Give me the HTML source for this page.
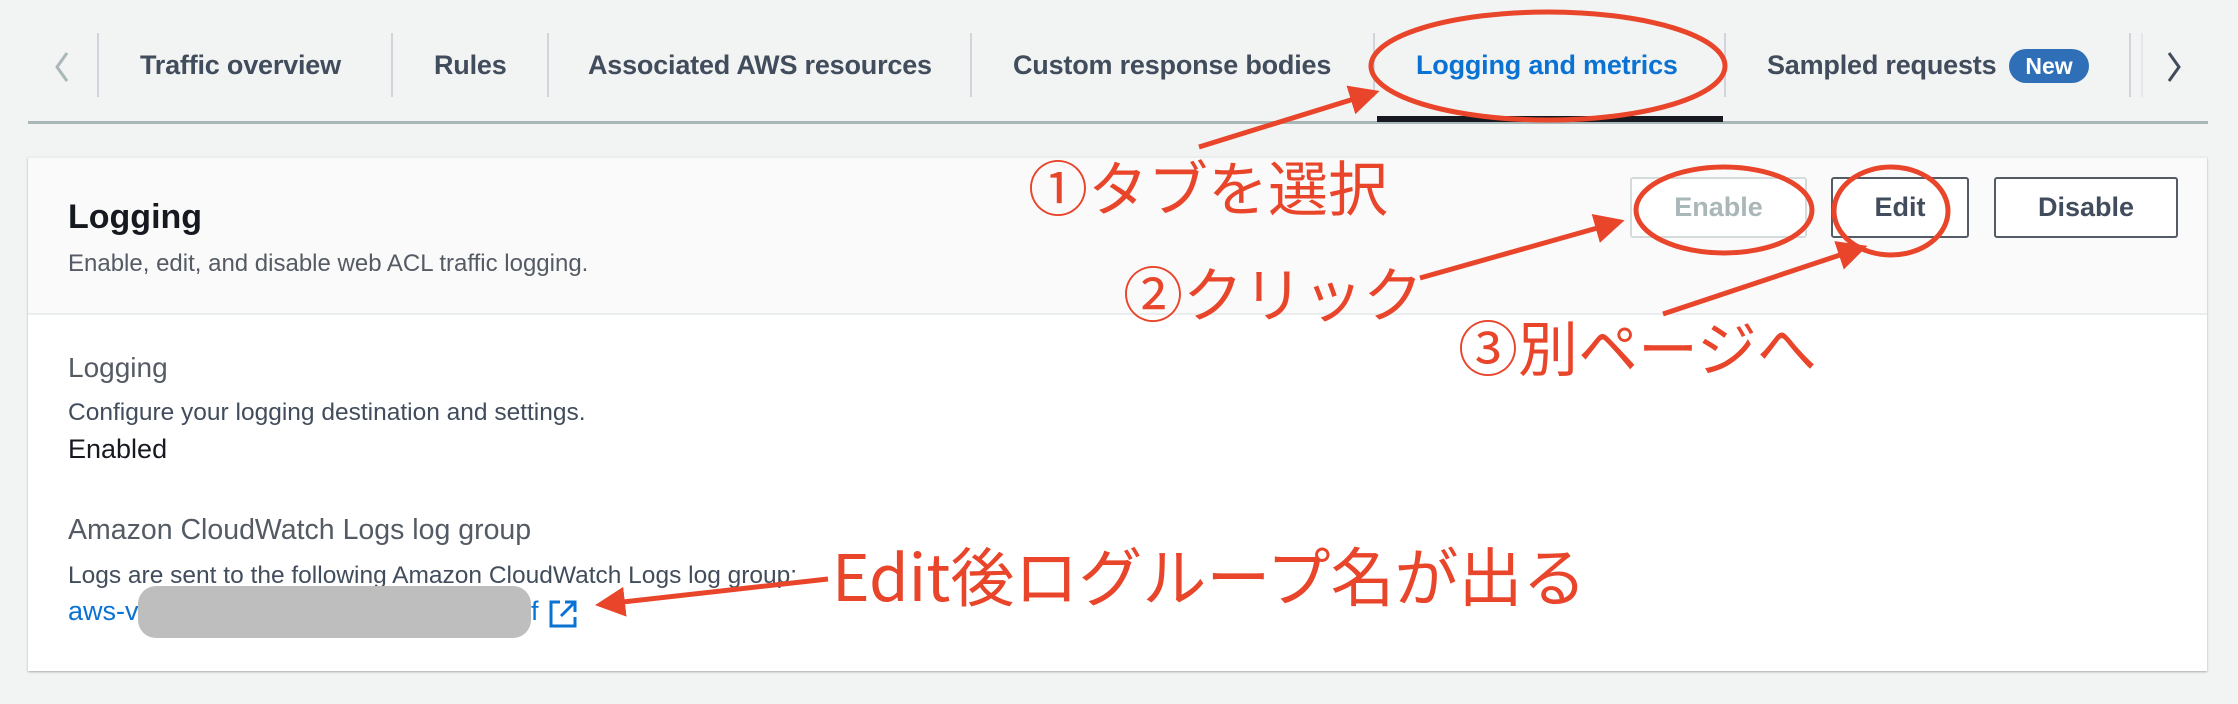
<!DOCTYPE html>
<html><head><meta charset="utf-8"><style>
*{margin:0;padding:0;box-sizing:border-box}
body{width:2238px;height:704px;background:#f2f3f3;position:relative;overflow:hidden;font-family:"Liberation Sans","Noto Sans CJK JP",sans-serif}
.a{position:absolute;white-space:nowrap}
.tab{font-size:27px;font-weight:bold;color:#414d5c;top:50px;line-height:30px;letter-spacing:-0.2px}
.div{position:absolute;width:2px;background:#d1d5db;top:33px;height:64px}
.card{position:absolute;left:28px;top:157px;width:2179px;height:514px;background:#fff;box-shadow:0 1px 2px rgba(0,0,0,.3);border-top:1px solid #eaeded}
.hdr{position:absolute;left:0;top:0;width:100%;height:157px;background:#fafafa;border-bottom:2px solid #eaeded}
.btn{position:absolute;top:177px;height:61px;border:2px solid #545b64;border-radius:3px;font-weight:bold;font-size:27px;color:#414d5c;display:flex;align-items:center;justify-content:center;background:#fff}
.jp{color:#e8452b;font-size:60px;font-family:"Noto Sans CJK JP",sans-serif;line-height:1}
</style></head><body>
<svg class="a" style="left:52px;top:50px" width="20" height="34"><path d="M15 3L5 17L15 31" fill="none" stroke="#aab7b8" stroke-width="3"/></svg>
<div class="div" style="left:97px"></div>
<div class="a tab" style="left:140px">Traffic overview</div>
<div class="div" style="left:391px"></div>
<div class="a tab" style="left:434px">Rules</div>
<div class="div" style="left:547px"></div>
<div class="a tab" style="left:588px">Associated AWS resources</div>
<div class="div" style="left:970px"></div>
<div class="a tab" style="left:1013px">Custom response bodies</div>
<div class="div" style="left:1373px"></div>
<div class="a tab" style="left:1416px;color:#0972d3">Logging and metrics</div>
<div class="div" style="left:1724px"></div>
<div class="a tab" style="left:1767px">Sampled requests</div>
<div class="a" style="left:2009px;top:49px;width:80px;height:34px;border-radius:17px;background:#2f6fb7;color:#fff;font-weight:bold;font-size:23px;text-align:center;line-height:34px">New</div>
<div class="div" style="left:2129px"></div>
<div class="div" style="left:2141px;background:#e4e7e8"></div>
<svg class="a" style="left:2164px;top:50px" width="20" height="34"><path d="M5 3L15 17L5 31" fill="none" stroke="#414d5c" stroke-width="3"/></svg>
<div class="a" style="left:28px;top:121px;width:2180px;height:3px;background:#aab7b8"></div>
<div class="a" style="left:1377px;top:116px;width:346px;height:6px;background:#16191f"></div>

<div class="card">
<div class="hdr"></div>
<div class="a" style="left:40px;top:40px;font-size:34px;font-weight:bold;color:#16191f">Logging</div>
<div class="a" style="left:40px;top:92px;font-size:24px;color:#545b64">Enable, edit, and disable web ACL traffic logging.</div>
<div class="a" style="left:40px;top:194px;font-size:28px;color:#545b64">Logging</div>
<div class="a" style="left:40px;top:241px;font-size:24.5px;color:#414d5c">Configure your logging destination and settings.</div>
<div class="a" style="left:40px;top:276px;font-size:27px;color:#16191f">Enabled</div>
<div class="a" style="left:40px;top:356px;font-size:28.5px;color:#545b64">Amazon CloudWatch Logs log group</div>
<div class="a" style="left:40px;top:404px;font-size:24.5px;color:#414d5c">Logs are sent to the following Amazon CloudWatch Logs log group:</div>
<div class="a" style="left:40px;top:438px;font-size:27px;color:#0972d3">aws-v</div>
<div class="a" style="left:110px;top:428px;width:393px;height:52px;border-radius:18px;background:#bebebe"></div>
<div class="a" style="left:503px;top:438px;font-size:27px;color:#0972d3">f</div>
<svg class="a" style="left:520px;top:441px" width="30" height="30" viewBox="0 0 30 30"><path d="M12 3H3v24h24v-9" fill="none" stroke="#0972d3" stroke-width="3"/><path d="M17 3h10v10M27 3L13 17" fill="none" stroke="#0972d3" stroke-width="3"/></svg>
</div>
<div class="btn" style="left:1630px;width:177px;border-color:#d5dbdb;color:#aab7b8">Enable</div>
<div class="btn" style="left:1831px;width:138px">Edit</div>
<div class="btn" style="left:1994px;width:184px">Disable</div>

<div class="a jp" style="left:1028px;top:156px">①タブを選択</div>
<div class="a jp" style="left:1123px;top:262px">②クリック</div>
<div class="a jp" style="left:1458px;top:316px">③別ページへ</div>
<div class="a jp" style="left:832px;top:542px;font-size:64px">Edit後ログループ名が出る</div>

<svg class="a" style="left:0;top:0" width="2238" height="704">
<defs><marker id="m" markerWidth="6" markerHeight="6" refX="4" refY="3" orient="auto"><path d="M0,0L6,3L0,6z" fill="#e8452b"/></marker></defs>
<g fill="none" stroke="#e8452b" stroke-width="5">
<ellipse cx="1548" cy="66" rx="177" ry="54"/>
<ellipse cx="1724" cy="210" rx="88" ry="43"/>
<ellipse cx="1891" cy="211" rx="57" ry="44"/>
<path d="M1199 147L1370 94" marker-end="url(#m)"/>
<path d="M1420 278L1615 223" marker-end="url(#m)"/>
<path d="M1663 314L1858 249" marker-end="url(#m)"/>
<path d="M828 579L605 604" marker-end="url(#m)"/>
</g></svg>
</body></html>
